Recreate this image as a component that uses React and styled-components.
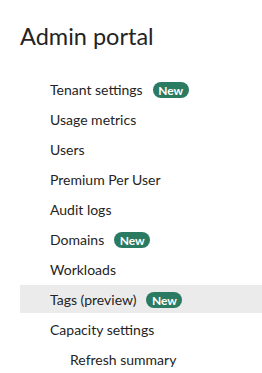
import React from "react";
import styled, { createGlobalStyle } from "styled-components";

const Global = createGlobalStyle`
  html, body { margin: 0; padding: 0; background: #ffffff; }
  body { font-family: Lato, "Open Sans", sans-serif; color: #242424; }
`;

const Page = styled.div`
  width: 262px;
  height: 373px;
  overflow: hidden;
  box-sizing: border-box;
  padding-left: 20px;
`;

const Title = styled.h1`
  margin: 0;
  padding-top: 20px;
  height: 75px;
  box-sizing: border-box;
  font-size: 23.5px;
  font-weight: 400;
  line-height: 32px;
  color: #242424;
`;

const Nav = styled.ul`
  list-style: none;
  margin: 0;
  padding: 0;
  display: flex;
  flex-direction: column;
  gap: 2px;
`;

const Item = styled.li`
  height: 28px;
  display: flex;
  align-items: center;
  gap: 10px;
  padding-left: ${(p) => (p.$sub ? 50 : 30)}px;
  background: ${(p) => (p.$active ? "#ebebeb" : "transparent")};
  font-size: 14px;
  color: #242424;
`;

const Badge = styled.span`
  display: inline-flex;
  align-items: center;
  justify-content: center;
  height: 16px;
  margin-top: 2px;
  padding: 0 5.5px;
  border-radius: 8px;
  background: #2b7a62;
  color: #ffffff;
  font-size: 12px;
  font-weight: 700;
`;

const items = [
  { label: "Tenant settings", isNew: true },
  { label: "Usage metrics" },
  { label: "Users" },
  { label: "Premium Per User" },
  { label: "Audit logs" },
  { label: "Domains", isNew: true },
  { label: "Workloads" },
  { label: "Tags (preview)", isNew: true, active: true },
  { label: "Capacity settings" },
  { label: "Refresh summary", sub: true },
];

export default function App() {
  return (
    <Page>
      <Global />
      <Title>Admin portal</Title>
      <Nav>
        {items.map((it) => (
          <Item key={it.label} $active={it.active} $sub={it.sub}>
            {it.label}
            {it.isNew && <Badge>New</Badge>}
          </Item>
        ))}
      </Nav>
    </Page>
  );
}
